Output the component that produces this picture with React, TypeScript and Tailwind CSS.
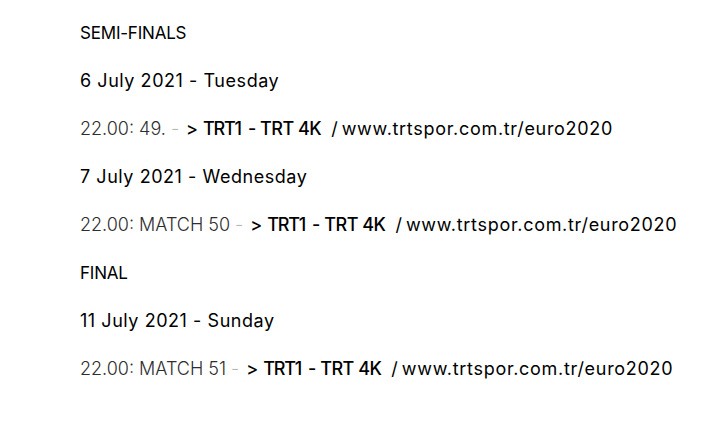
export default function App() {
  const rows: { kind: "head" | "date" | "match"; text?: string; label?: string }[] = [
    { kind: "head", text: "SEMI-FINALS" },
    { kind: "date", text: "6 July 2021 - Tuesday" },
    { kind: "match", label: "22.00: 49." },
    { kind: "date", text: "7 July 2021 - Wednesday" },
    { kind: "match", label: "22.00: MATCH 50" },
    { kind: "head", text: "FINAL" },
    { kind: "date", text: "11 July 2021 - Sunday" },
    { kind: "match", label: "22.00: MATCH 51" },
  ];

  return (
    <div className="w-[717px] h-[440px] bg-white pl-[80px] pt-[9px] font-['Inter',sans-serif] text-black">
      {rows.map((row, i) => {
        if (row.kind === "head") {
          return (
            <p key={i} className="leading-[48px] text-[17px] tracking-[-0.2px]">
              {row.text}
            </p>
          );
        }
        if (row.kind === "date") {
          return (
            <p key={i} className="leading-[48px] text-[18px] tracking-[0.55px]">
              {row.text}
            </p>
          );
        }
        return (
          <p key={i} className="leading-[48px] text-[18px] whitespace-nowrap flex items-baseline">
            <span className="font-light text-[#2e2e2e]">{row.label}</span>
            <span className="font-light text-[#b5b5b5] ml-[5px]">-</span>
            <span className="ml-[7px] font-medium">&gt;</span>
            <span className="ml-[5px] font-medium tracking-[-1.2px]">TRT1</span>
            <span className="ml-[7px] font-medium tracking-[-0.5px]">- TRT 4K</span>
            <span className="ml-[10px]">/</span>
            <span className="ml-[4px] tracking-[0.7px]">www.trtspor.com.tr/euro2020</span>
          </p>
        );
      })}
    </div>
  );
}
